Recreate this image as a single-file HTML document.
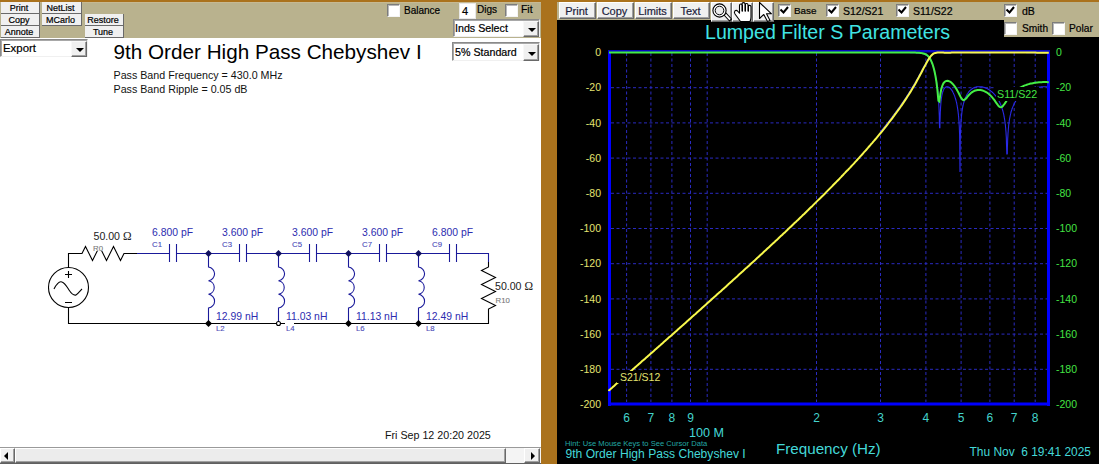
<!DOCTYPE html>
<html><head><meta charset="utf-8">
<style>
html,body{margin:0;padding:0;}
body{width:1099px;height:464px;overflow:hidden;position:relative;background:#aa721d;font-family:"Liberation Sans",sans-serif;}
.a{position:absolute;}
.tan{background:#b9b28e;}
.btn{-webkit-text-stroke:0.2px currentColor;position:absolute;box-sizing:border-box;background:#f0f0f0;border-top:1px solid #ffffff;border-left:1px solid #ffffff;border-right:1px solid #696969;border-bottom:1px solid #696969;box-shadow:inset -1px -1px 0 #a0a0a0;color:#000;text-align:center;white-space:nowrap;}
.sb{font-size:9px;line-height:11px;padding-right:2px;padding-top:1px;border-top:0;border-left:0;box-shadow:none;border-right:1px solid #6a6a6a;border-bottom:1px solid #6a6a6a;}
.rb{font-size:11px;line-height:15px;color:#1c1c3c;padding-top:1px;padding-right:2px;}
.chk{position:absolute;box-sizing:border-box;width:13px;height:13px;background:#fff;border-top:1px solid #7c7c7c;border-left:1px solid #7c7c7c;border-right:1px solid #f4f4f4;border-bottom:1px solid #f4f4f4;box-shadow:inset 1px 1px 0 #b8b8b8;}
.lbl{-webkit-text-stroke:0.2px currentColor;position:absolute;font-size:10px;line-height:12px;color:#000;white-space:nowrap;}
.dd{-webkit-text-stroke:0.2px currentColor;position:absolute;box-sizing:border-box;background:#fff;border-top:1px solid #8a8a8a;border-left:1px solid #8a8a8a;border-right:1px solid #f0f0f0;border-bottom:1px solid #f0f0f0;box-shadow:inset 1px 1px 0 #a8a8a8;font-size:11px;white-space:nowrap;}
.ddb{position:absolute;box-sizing:border-box;background:#f0f0f0;border-top:1px solid #f8f8f8;border-left:1px solid #f8f8f8;border-right:1px solid #696969;border-bottom:1px solid #696969;box-shadow:inset -1px -1px 0 #a0a0a0;}
.tri{position:absolute;width:0;height:0;border-left:4px solid transparent;border-right:4px solid transparent;border-top:4px solid #000;}
svg text{font-family:"Liberation Sans",sans-serif;}
</style></head><body>
<!-- LEFT PANEL -->
<div class="a tan" style="left:0;top:2px;width:541px;height:36px;"></div>
<div class="a" style="left:0;top:2px;width:541px;height:1px;background:#c6b993;"></div>
<div class="a" style="left:0;top:38px;width:541px;height:410px;background:#fff;"></div>

<div class="btn sb" style="left:1px;top:2px;width:39px;height:12px;">Print</div>
<div class="btn sb" style="left:1px;top:14px;width:39px;height:12px;">Copy</div>
<div class="btn sb" style="left:1px;top:26px;width:39px;height:12px;">Annote</div>
<div class="btn sb" style="left:42px;top:2px;width:40px;height:12px;">NetList</div>
<div class="btn sb" style="left:42px;top:14px;width:40px;height:12px;">MCarlo</div>
<div class="btn sb" style="left:85px;top:14px;width:39px;height:12px;">Restore</div>
<div class="btn sb" style="left:85px;top:26px;width:39px;height:12px;">Tune</div>

<div class="dd" style="left:0;top:39px;width:88px;height:18px;"><span class="a" style="left:2px;top:2px;font-size:11.4px;line-height:13px;">Export</span>
 <div class="ddb" style="left:70px;top:1px;width:16px;height:16px;"><div class="tri" style="left:4px;top:6px;"></div></div></div>

<div class="chk" style="left:387px;top:4px;"></div>
<div class="lbl" style="left:404px;top:5px;">Balance</div>
<div class="dd" style="left:459px;top:3px;width:17px;height:16px;box-shadow:none;border-color:#e8e8e8;"><span class="a" style="left:2px;top:1px;font-size:11px;line-height:13px;">4</span></div>
<div class="lbl" style="left:477px;top:4px;font-size:10px;">Digs</div>
<div class="chk" style="left:505px;top:4px;"></div>
<div class="lbl" style="left:521px;top:4px;font-size:10.4px;">Fit</div>

<div class="dd" style="left:453px;top:19px;width:87px;height:18px;"><span class="a" style="left:1px;top:2px;font-size:10.7px;line-height:13px;">Inds Select</span>
 <div class="ddb" style="left:69px;top:1px;width:16px;height:16px;"><div class="tri" style="left:4px;top:6px;"></div></div></div>
<div class="dd" style="left:452px;top:42px;width:88px;height:19px;"><span class="a" style="left:2px;top:3px;font-size:10.7px;line-height:13px;">5% Standard</span>
 <div class="ddb" style="left:70px;top:1px;width:16px;height:17px;"><div class="tri" style="left:4px;top:7px;"></div></div></div>

<svg class="a" style="left:0;top:0;" width="541" height="464" viewBox="0 0 541 464">
 <g fill="#000">
  <text x="113.5" y="58.5" font-size="20.7">9th Order High Pass Chebyshev I</text>
  <text x="113.5" y="78.5" font-size="10.7" fill="#111">Pass Band Frequency = 430.0 MHz</text>
  <text x="113.5" y="92.5" font-size="10.7" fill="#111">Pass Band Ripple = 0.05 dB</text>
  <text x="385" y="438.5" font-size="10.7" fill="#111">Fri Sep 12 20:20 2025</text>
 </g>
 <g fill="none" stroke="#000" stroke-width="1.1">
  <circle cx="68.5" cy="287.5" r="20"/>
  <path d="M68.5,267.5 L68.5,253.5 L82,253.5 L85.5,246.5 L92.5,260.5 L99.5,246.5 L106.5,260.5 L113.5,246.5 L120.5,260.5 L124,253.5 L137,253.5"/>
  <path d="M68.5,307.5 L68.5,323.5 L488.5,323.5 L488.5,309 L495.5,305.5 L481.5,298.5 L495.5,291.5 L481.5,284.5 L495.5,277.5 L481.5,270.5 L488.5,267 L488.5,262"/>
  <path d="M65,274.5 L72,274.5 M68.5,271 L68.5,278 M65,302.5 L72,302.5"/>
  <path d="M54,289 C57,283 60,281 62,282 C65,283 67,287 69,290 C71,293 73,296 76,295 C78,294 80,291 82,289"/>
 </g>
 <g fill="none" stroke="#1a1a9a" stroke-width="1.1">
  <path d="M137,253.5 L169.5,253.5 M176.5,253.5 L239.5,253.5 M246.5,253.5 L309.5,253.5 M316.5,253.5 L379.5,253.5 M386.5,253.5 L449.5,253.5 M456.5,253.5 L488.5,253.5 L488.5,262"/>
  <line x1="169.5" y1="244" x2="169.5" y2="262"/><line x1="176.5" y1="244" x2="176.5" y2="262"/><line x1="239.5" y1="244" x2="239.5" y2="262"/><line x1="246.5" y1="244" x2="246.5" y2="262"/><line x1="309.5" y1="244" x2="309.5" y2="262"/><line x1="316.5" y1="244" x2="316.5" y2="262"/><line x1="379.5" y1="244" x2="379.5" y2="262"/><line x1="386.5" y1="244" x2="386.5" y2="262"/><line x1="449.5" y1="244" x2="449.5" y2="262"/><line x1="456.5" y1="244" x2="456.5" y2="262"/>
  <path d="M208.5,253 L208.5,267 A6.9,6.9 0 0 1 208.5,280.7 A6.9,6.9 0 0 1 208.5,294.3 A6.9,6.9 0 0 1 208.5,308.0 L208.5,323"/><path d="M278.5,253 L278.5,267 A6.9,6.9 0 0 1 278.5,280.7 A6.9,6.9 0 0 1 278.5,294.3 A6.9,6.9 0 0 1 278.5,308.0 L278.5,323"/><path d="M348.5,253 L348.5,267 A6.9,6.9 0 0 1 348.5,280.7 A6.9,6.9 0 0 1 348.5,294.3 A6.9,6.9 0 0 1 348.5,308.0 L348.5,323"/><path d="M418.5,253 L418.5,267 A6.9,6.9 0 0 1 418.5,280.7 A6.9,6.9 0 0 1 418.5,294.3 A6.9,6.9 0 0 1 418.5,308.0 L418.5,323"/>
 </g>
 <g fill="#101060">
  <path d="M208.5,250 L212,253.5 L208.5,257 L205,253.5 Z"/><path d="M278.5,250 L282,253.5 L278.5,257 L275,253.5 Z"/><path d="M348.5,250 L352,253.5 L348.5,257 L345,253.5 Z"/><path d="M418.5,250 L422,253.5 L418.5,257 L415,253.5 Z"/>
 </g>
 <g fill="#000">
  <path d="M208.5,320 L212,323.5 L208.5,327 L205,323.5 Z"/><path d="M348.5,320 L352,323.5 L348.5,327 L345,323.5 Z"/><path d="M418.5,320 L422,323.5 L418.5,327 L415,323.5 Z"/>
 </g>
 <circle cx="278.5" cy="323.5" r="2" fill="#fff" stroke="#000" stroke-width="1.1"/>
 <!-- label backgrounds -->
 <rect x="93" y="244" width="10" height="7" fill="#fff"/>
 <rect x="285" y="322" width="9" height="10" fill="#fff"/>
 <g font-size="7.8" fill="#777" stroke="#777" stroke-width="0.1">
  <text x="93" y="250.5">R0</text>
  <text x="495.5" y="302.5">R10</text>
 </g>
 <g font-size="10.6" fill="#222">
  <text x="93.5" y="239.5">50.00 <tspan font-family="Liberation Serif" font-size="11.5">Ω</tspan></text>
  <text x="495" y="289.5">50.00 <tspan font-family="Liberation Serif" font-size="11.5">Ω</tspan></text>
 </g>
 <g font-size="10.4" fill="#2c2cb0">
  <text x="152" y="235.5">6.800 pF</text>
  <text x="222" y="235.5">3.600 pF</text>
  <text x="292" y="235.5">3.600 pF</text>
  <text x="362" y="235.5">3.600 pF</text>
  <text x="432" y="235.5">6.800 pF</text>
  <text x="216" y="319.5">12.99 nH</text>
  <text x="286" y="319.5">11.03 nH</text>
  <text x="356" y="319.5">11.13 nH</text>
  <text x="426" y="319.5">12.49 nH</text>
 </g>
 <g font-size="7.8" fill="#4a4ab8" stroke="#4a4ab8" stroke-width="0.1">
  <text x="152" y="246.5">C1</text><text x="222" y="246.5">C3</text><text x="292" y="246.5">C5</text><text x="362" y="246.5">C7</text><text x="432" y="246.5">C9</text>
  <text x="216" y="331">L2</text><text x="286" y="331">L4</text><text x="356" y="331">L6</text><text x="426" y="331">L8</text>
 </g>
</svg>

<!-- scrollbar -->
<div class="a" style="left:0;top:447px;width:541px;height:1px;background:#9a9a9a;"></div>
<div class="a" style="left:0;top:448px;width:541px;height:16px;background:#f4f4f4;"></div>
<div class="btn" style="left:0;top:448px;width:15px;height:15px;"><div class="a" style="left:3px;top:3px;width:0;height:0;border-top:4px solid transparent;border-bottom:4px solid transparent;border-right:4px solid #000;"></div></div>
<div class="btn" style="left:15px;top:448px;width:491px;height:15px;background:#ececec;"></div>
<div class="btn" style="left:524px;top:448px;width:16px;height:15px;"><div class="a" style="left:6px;top:3px;width:0;height:0;border-top:4px solid transparent;border-bottom:4px solid transparent;border-left:4px solid #000;"></div></div>
<div class="a" style="left:0;top:463px;width:541px;height:1px;background:#606060;"></div>

<!-- RIGHT PANEL -->
<div class="a tan" style="left:557px;top:2px;width:542px;height:18px;background:#b9b28e;"></div>
<div class="a tan" style="left:1004px;top:20px;width:95px;height:17px;background:#b9b28e;"></div>
<div class="a" style="left:557px;top:20px;width:542px;height:444px;background:#000;"></div>
<div class="a" style="left:1004px;top:20px;width:95px;height:17px;background:#b9b28e;"></div>

<div class="btn rb" style="left:559px;top:2px;width:37px;height:17px;">Print</div>
<div class="btn rb" style="left:597px;top:2px;width:37px;height:17px;">Copy</div>
<div class="btn rb" style="left:635px;top:2px;width:37px;height:17px;">Limits</div>
<div class="btn rb" style="left:673px;top:2px;width:37px;height:17px;">Text</div>
<div class="btn" style="left:711px;top:2px;width:21px;height:20px;"></div>
<div class="btn" style="left:732px;top:2px;width:21px;height:20px;"></div>
<div class="btn" style="left:753px;top:2px;width:21px;height:20px;"></div>
<svg class="a" style="left:0;top:0;" width="780" height="24" viewBox="0 0 780 24">
 <g fill="#fff" stroke="#000" stroke-width="1.1" stroke-linejoin="round">
  <path d="M724,15 L726,13 L731.5,19 L729.5,21 Z"/>
  <circle cx="719.5" cy="10.5" r="6.6"/>
  <circle cx="719.5" cy="10.5" r="4.3" fill="#ececec" stroke-width="1"/>
  <path d="M740.5,21.5 L735,14 Q733.8,12 735,10.8 Q736.5,9.8 738,11.5 L739.5,13.2 L739.5,5.5 Q739.5,4 740.8,4 Q742,4 742,5.5 L742,11 L742,4 Q742,2.6 743.5,2.6 Q745,2.6 745,4 L745,11 L745,4.8 Q745,3.5 746.5,3.5 Q748,3.5 748,4.8 L748,11 L748,6.5 Q748,5.4 749.4,5.4 Q751,5.4 751,6.5 L751,17 Q751,19.5 750,21.5 Z"/>
  <path d="M742.5,4.5 L742.5,11.5 M745.5,4 L745.5,11.5 M748.5,5 L748.5,11.5" fill="none" stroke-width="1"/>
  <path d="M759.5,2.5 L759.5,18.5 L763.8,14.5 L767.5,21.5 L770,20.5 L766.5,13.8 L771.5,13.8 Z"/>
 </g>
</svg>

<div class="chk" style="left:778px;top:4px;"></div>
<div class="lbl" style="left:794px;top:4.5px;font-size:9.9px;">Base</div>
<div class="chk" style="left:826px;top:4px;"></div>
<div class="lbl" style="left:843px;top:4.5px;font-size:10.5px;">S12/S21</div>
<div class="chk" style="left:896px;top:4px;"></div>
<div class="lbl" style="left:913px;top:4.5px;font-size:10.5px;">S11/S22</div>
<div class="chk" style="left:1004px;top:4px;"></div>
<div class="lbl" style="left:1022px;top:4.5px;font-size:10.5px;">dB</div>
<div class="chk" style="left:1004px;top:22px;"></div>
<div class="lbl" style="left:1022px;top:22.5px;font-size:10.2px;">Smith</div>
<div class="chk" style="left:1052px;top:22px;"></div>
<div class="lbl" style="left:1069px;top:22.5px;font-size:10.2px;">Polar</div>
<svg class="a" style="left:0;top:0;" width="1099" height="20" viewBox="0 0 1099 20">
 <g fill="none" stroke="#000" stroke-width="2">
  <path d="M780.5,9.5 L783.5,12.5 L788,7"/>
  <path d="M828.5,9.5 L831.5,12.5 L836,7"/>
  <path d="M898.5,9.5 L901.5,12.5 L906,7"/>
  <path d="M1006.5,9.5 L1009.5,12.5 L1014,7"/>
 </g>
</svg>

<svg class="a" style="left:0;top:0;" width="1099" height="464" viewBox="0 0 1099 464">
 <text x="705" y="38.5" font-size="19.6" fill="#40e4e4">Lumped Filter S Parameters</text>
 <g stroke="#2a2ac0" stroke-width="1" stroke-dasharray="3,2.5">
  <line x1="626.6" y1="53" x2="626.6" y2="402" />
<line x1="650.9" y1="53" x2="650.9" y2="402" />
<line x1="671.9" y1="53" x2="671.9" y2="402" />
<line x1="690.5" y1="53" x2="690.5" y2="402" />
<line x1="707.2" y1="53" x2="707.2" y2="402" />
<line x1="816.5" y1="53" x2="816.5" y2="402" />
<line x1="880.5" y1="53" x2="880.5" y2="402" />
<line x1="925.9" y1="53" x2="925.9" y2="402" />
<line x1="961.1" y1="53" x2="961.1" y2="402" />
<line x1="989.9" y1="53" x2="989.9" y2="402" />
<line x1="1014.2" y1="53" x2="1014.2" y2="402" />
<line x1="1035.2" y1="53" x2="1035.2" y2="402" />
<line x1="611" y1="87.7" x2="1047" y2="87.7" />
<line x1="611" y1="122.9" x2="1047" y2="122.9" />
<line x1="611" y1="158.1" x2="1047" y2="158.1" />
<line x1="611" y1="193.3" x2="1047" y2="193.3" />
<line x1="611" y1="228.5" x2="1047" y2="228.5" />
<line x1="611" y1="263.7" x2="1047" y2="263.7" />
<line x1="611" y1="298.9" x2="1047" y2="298.9" />
<line x1="611" y1="334.1" x2="1047" y2="334.1" />
<line x1="611" y1="369.3" x2="1047" y2="369.3" />
 </g>
 <path d="M681.9,52.5 L682.0,52.5 L682.2,52.5 L682.3,52.5 L682.4,52.5 L682.6,52.5 L682.7,52.5 L682.9,52.5 L683.0,52.5 L683.2,52.5 L683.3,52.5 L683.5,52.5 L683.6,52.5 L683.8,52.5 L683.9,52.5 L684.1,52.5 L684.2,52.5 L684.4,52.5 L684.5,52.5 L684.7,52.5 L684.8,52.5 L684.9,52.5 L685.1,52.5 L685.2,52.5 L685.4,52.5 L685.5,52.5 L685.7,52.5 L685.8,52.5 L686.0,52.5 L686.1,52.5 L686.3,52.5 L686.4,52.5 L686.6,52.5 L686.7,52.5 L686.9,52.5 L687.0,52.5 L687.1,52.5 L687.3,52.5 L687.4,52.5 L687.6,52.5 L687.7,52.5 L687.9,52.5 L688.0,52.5 L688.2,52.5 L688.3,52.5 L688.5,52.5 L688.6,52.5 L688.8,52.5 L688.9,52.5 L689.1,52.5 L689.2,52.5 L689.3,52.5 L689.5,52.5 L689.6,52.5 L689.8,52.5 L689.9,52.5 L690.1,52.5 L690.2,52.5 L690.4,52.5 L690.5,52.5 L690.7,52.5 L690.8,52.5 L691.0,52.5 L691.1,52.5 L691.3,52.5 L691.4,52.5 L691.6,52.5 L691.7,52.5 L691.8,52.5 L692.0,52.5 L692.1,52.5 L692.3,52.5 L692.4,52.5 L692.6,52.5 L692.7,52.5 L692.9,52.5 L693.0,52.5 L693.2,52.5 L693.3,52.5 L693.5,52.5 L693.6,52.5 L693.8,52.5 L693.9,52.5 L694.0,52.5 L694.2,52.5 L694.3,52.5 L694.5,52.5 L694.6,52.5 L694.8,52.5 L694.9,52.5 L695.1,52.5 L695.2,52.5 L695.4,52.5 L695.5,52.5 L695.7,52.5 L695.8,52.5 L696.0,52.5 L696.1,52.5 L696.3,52.5 L696.4,52.5 L696.5,52.5 L696.7,52.5 L696.8,52.5 L697.0,52.5 L697.1,52.5 L697.3,52.5 L697.4,52.5 L697.6,52.5 L697.7,52.5 L697.9,52.5 L698.0,52.5 L698.2,52.5 L698.3,52.5 L698.5,52.5 L698.6,52.5 L698.7,52.5 L698.9,52.5 L699.0,52.5 L699.2,52.5 L699.3,52.5 L699.5,52.5 L699.6,52.5 L699.8,52.5 L699.9,52.5 L700.1,52.5 L700.2,52.5 L700.4,52.5 L700.5,52.5 L700.7,52.5 L700.8,52.5 L701.0,52.5 L701.1,52.5 L701.2,52.5 L701.4,52.5 L701.5,52.5 L701.7,52.5 L701.8,52.5 L702.0,52.5 L702.1,52.5 L702.3,52.5 L702.4,52.5 L702.6,52.5 L702.7,52.5 L702.9,52.5 L703.0,52.5 L703.2,52.5 L703.3,52.5 L703.4,52.5 L703.6,52.5 L703.7,52.5 L703.9,52.5 L704.0,52.5 L704.2,52.5 L704.3,52.5 L704.5,52.5 L704.6,52.5 L704.8,52.5 L704.9,52.5 L705.1,52.5 L705.2,52.5 L705.4,52.5 L705.5,52.5 L705.6,52.5 L705.8,52.5 L705.9,52.5 L706.1,52.5 L706.2,52.5 L706.4,52.5 L706.5,52.5 L706.7,52.5 L706.8,52.5 L707.0,52.5 L707.1,52.5 L707.3,52.5 L707.4,52.5 L707.6,52.5 L707.7,52.5 L707.9,52.5 L708.0,52.5 L708.1,52.5 L708.3,52.5 L708.4,52.5 L708.6,52.5 L708.7,52.5 L708.9,52.5 L709.0,52.5 L709.2,52.5 L709.3,52.5 L709.5,52.5 L709.6,52.5 L709.8,52.5 L709.9,52.5 L710.1,52.5 L710.2,52.5 L710.3,52.5 L710.5,52.5 L710.6,52.5 L710.8,52.5 L710.9,52.5 L711.1,52.5 L711.2,52.5 L711.4,52.5 L711.5,52.5 L711.7,52.5 L711.8,52.5 L712.0,52.5 L712.1,52.5 L712.3,52.5 L712.4,52.5 L712.6,52.5 L712.7,52.5 L712.8,52.5 L713.0,52.5 L713.1,52.5 L713.3,52.5 L713.4,52.5 L713.6,52.5 L713.7,52.5 L713.9,52.5 L714.0,52.5 L714.2,52.5 L714.3,52.5 L714.5,52.5 L714.6,52.5 L714.8,52.5 L714.9,52.5 L715.0,52.5 L715.2,52.5 L715.3,52.5 L715.5,52.5 L715.6,52.5 L715.8,52.5 L715.9,52.5 L716.1,52.5 L716.2,52.5 L716.4,52.5 L716.5,52.5 L716.7,52.5 L716.8,52.5 L717.0,52.5 L717.1,52.5 L717.3,52.5 L717.4,52.5 L717.5,52.5 L717.7,52.5 L717.8,52.5 L718.0,52.5 L718.1,52.5 L718.3,52.5 L718.4,52.5 L718.6,52.5 L718.7,52.5 L718.9,52.5 L719.0,52.5 L719.2,52.5 L719.3,52.5 L719.5,52.5 L719.6,52.5 L719.7,52.5 L719.9,52.5 L720.0,52.5 L720.2,52.5 L720.3,52.5 L720.5,52.5 L720.6,52.5 L720.8,52.5 L720.9,52.5 L721.1,52.5 L721.2,52.5 L721.4,52.5 L721.5,52.5 L721.7,52.5 L721.8,52.5 L721.9,52.5 L722.1,52.5 L722.2,52.5 L722.4,52.5 L722.5,52.5 L722.7,52.5 L722.8,52.5 L723.0,52.5 L723.1,52.5 L723.3,52.5 L723.4,52.5 L723.6,52.5 L723.7,52.5 L723.9,52.5 L724.0,52.5 L724.2,52.5 L724.3,52.5 L724.4,52.5 L724.6,52.5 L724.7,52.5 L724.9,52.5 L725.0,52.5 L725.2,52.5 L725.3,52.5 L725.5,52.5 L725.6,52.5 L725.8,52.5 L725.9,52.5 L726.1,52.5 L726.2,52.5 L726.4,52.5 L726.5,52.5 L726.6,52.5 L726.8,52.5 L726.9,52.5 L727.1,52.5 L727.2,52.5 L727.4,52.5 L727.5,52.5 L727.7,52.5 L727.8,52.5 L728.0,52.5 L728.1,52.5 L728.3,52.5 L728.4,52.5 L728.6,52.5 L728.7,52.5 L728.9,52.5 L729.0,52.5 L729.1,52.5 L729.3,52.5 L729.4,52.5 L729.6,52.5 L729.7,52.5 L729.9,52.5 L730.0,52.5 L730.2,52.5 L730.3,52.5 L730.5,52.5 L730.6,52.5 L730.8,52.5 L730.9,52.5 L731.1,52.5 L731.2,52.5 L731.3,52.5 L731.5,52.5 L731.6,52.5 L731.8,52.5 L731.9,52.5 L732.1,52.5 L732.2,52.5 L732.4,52.5 L732.5,52.5 L732.7,52.5 L732.8,52.5 L733.0,52.5 L733.1,52.5 L733.3,52.5 L733.4,52.5 L733.6,52.5 L733.7,52.5 L733.8,52.5 L734.0,52.5 L734.1,52.5 L734.3,52.5 L734.4,52.5 L734.6,52.5 L734.7,52.5 L734.9,52.5 L735.0,52.5 L735.2,52.5 L735.3,52.5 L735.5,52.5 L735.6,52.5 L735.8,52.5 L735.9,52.5 L736.0,52.5 L736.2,52.5 L736.3,52.5 L736.5,52.5 L736.6,52.5 L736.8,52.5 L736.9,52.5 L737.1,52.5 L737.2,52.5 L737.4,52.5 L737.5,52.5 L737.7,52.5 L737.8,52.5 L738.0,52.5 L738.1,52.5 L738.3,52.5 L738.4,52.5 L738.5,52.5 L738.7,52.5 L738.8,52.5 L739.0,52.5 L739.1,52.5 L739.3,52.5 L739.4,52.5 L739.6,52.5 L739.7,52.5 L739.9,52.5 L740.0,52.5 L740.2,52.5 L740.3,52.5 L740.5,52.5 L740.6,52.5 L740.7,52.5 L740.9,52.5 L741.0,52.5 L741.2,52.5 L741.3,52.5 L741.5,52.5 L741.6,52.5 L741.8,52.5 L741.9,52.5 L742.1,52.5 L742.2,52.5 L742.4,52.5 L742.5,52.5 L742.7,52.5 L742.8,52.5 L742.9,52.5 L743.1,52.5 L743.2,52.5 L743.4,52.5 L743.5,52.5 L743.7,52.5 L743.8,52.5 L744.0,52.5 L744.1,52.5 L744.3,52.5 L744.4,52.5 L744.6,52.5 L744.7,52.5 L744.9,52.5 L745.0,52.5 L745.2,52.5 L745.3,52.5 L745.4,52.5 L745.6,52.5 L745.7,52.5 L745.9,52.5 L746.0,52.5 L746.2,52.5 L746.3,52.5 L746.5,52.5 L746.6,52.5 L746.8,52.5 L746.9,52.5 L747.1,52.5 L747.2,52.5 L747.4,52.5 L747.5,52.5 L747.6,52.5 L747.8,52.5 L747.9,52.5 L748.1,52.5 L748.2,52.5 L748.4,52.5 L748.5,52.5 L748.7,52.5 L748.8,52.5 L749.0,52.5 L749.1,52.5 L749.3,52.5 L749.4,52.5 L749.6,52.5 L749.7,52.5 L749.9,52.5 L750.0,52.5 L750.1,52.5 L750.3,52.5 L750.4,52.5 L750.6,52.5 L750.7,52.5 L750.9,52.5 L751.0,52.5 L751.2,52.5 L751.3,52.5 L751.5,52.5 L751.6,52.5 L751.8,52.5 L751.9,52.5 L752.1,52.5 L752.2,52.5 L752.3,52.5 L752.5,52.5 L752.6,52.5 L752.8,52.5 L752.9,52.5 L753.1,52.5 L753.2,52.5 L753.4,52.5 L753.5,52.5 L753.7,52.5 L753.8,52.5 L754.0,52.5 L754.1,52.5 L754.3,52.5 L754.4,52.5 L754.6,52.5 L754.7,52.5 L754.8,52.5 L755.0,52.5 L755.1,52.5 L755.3,52.5 L755.4,52.5 L755.6,52.5 L755.7,52.5 L755.9,52.5 L756.0,52.5 L756.2,52.5 L756.3,52.5 L756.5,52.5 L756.6,52.5 L756.8,52.5 L756.9,52.5 L757.0,52.5 L757.2,52.5 L757.3,52.5 L757.5,52.5 L757.6,52.5 L757.8,52.5 L757.9,52.5 L758.1,52.5 L758.2,52.5 L758.4,52.5 L758.5,52.5 L758.7,52.5 L758.8,52.5 L759.0,52.5 L759.1,52.5 L759.2,52.5 L759.4,52.5 L759.5,52.5 L759.7,52.5 L759.8,52.5 L760.0,52.5 L760.1,52.5 L760.3,52.5 L760.4,52.5 L760.6,52.5 L760.7,52.5 L760.9,52.5 L761.0,52.5 L761.2,52.5 L761.3,52.5 L761.5,52.5 L761.6,52.5 L761.7,52.5 L761.9,52.5 L762.0,52.5 L762.2,52.5 L762.3,52.5 L762.5,52.5 L762.6,52.5 L762.8,52.5 L762.9,52.5 L763.1,52.5 L763.2,52.5 L763.4,52.5 L763.5,52.5 L763.7,52.5 L763.8,52.5 L763.9,52.5 L764.1,52.5 L764.2,52.5 L764.4,52.5 L764.5,52.5 L764.7,52.5 L764.8,52.5 L765.0,52.5 L765.1,52.5 L765.3,52.5 L765.4,52.5 L765.6,52.5 L765.7,52.5 L765.9,52.5 L766.0,52.5 L766.2,52.5 L766.3,52.5 L766.4,52.5 L766.6,52.5 L766.7,52.5 L766.9,52.5 L767.0,52.5 L767.2,52.5 L767.3,52.5 L767.5,52.5 L767.6,52.5 L767.8,52.5 L767.9,52.5 L768.1,52.5 L768.2,52.5 L768.4,52.5 L768.5,52.5 L768.6,52.5 L768.8,52.5 L768.9,52.5 L769.1,52.5 L769.2,52.5 L769.4,52.5 L769.5,52.5 L769.7,52.5 L769.8,52.5 L770.0,52.5 L770.1,52.5 L770.3,52.5 L770.4,52.5 L770.6,52.5 L770.7,52.5 L770.9,52.5 L771.0,52.5 L771.1,52.5 L771.3,52.5 L771.4,52.5 L771.6,52.5 L771.7,52.5 L771.9,52.5 L772.0,52.5 L772.2,52.5 L772.3,52.5 L772.5,52.5 L772.6,52.5 L772.8,52.5 L772.9,52.5 L773.1,52.5 L773.2,52.5 L773.3,52.5 L773.5,52.5 L773.6,52.5 L773.8,52.5 L773.9,52.5 L774.1,52.5 L774.2,52.5 L774.4,52.5 L774.5,52.5 L774.7,52.5 L774.8,52.5 L775.0,52.5 L775.1,52.5 L775.3,52.5 L775.4,52.5 L775.5,52.5 L775.7,52.5 L775.8,52.5 L776.0,52.5 L776.1,52.5 L776.3,52.5 L776.4,52.5 L776.6,52.5 L776.7,52.5 L776.9,52.5 L777.0,52.5 L777.2,52.5 L777.3,52.5 L777.5,52.5 L777.6,52.5 L777.8,52.5 L777.9,52.5 L778.0,52.5 L778.2,52.5 L778.3,52.5 L778.5,52.5 L778.6,52.5 L778.8,52.5 L778.9,52.5 L779.1,52.5 L779.2,52.5 L779.4,52.5 L779.5,52.5 L779.7,52.5 L779.8,52.5 L780.0,52.5 L780.1,52.5 L780.2,52.5 L780.4,52.5 L780.5,52.5 L780.7,52.5 L780.8,52.5 L781.0,52.5 L781.1,52.5 L781.3,52.5 L781.4,52.5 L781.6,52.5 L781.7,52.5 L781.9,52.5 L782.0,52.5 L782.2,52.5 L782.3,52.5 L782.5,52.5 L782.6,52.5 L782.7,52.5 L782.9,52.5 L783.0,52.5 L783.2,52.5 L783.3,52.5 L783.5,52.5 L783.6,52.5 L783.8,52.5 L783.9,52.5 L784.1,52.5 L784.2,52.5 L784.4,52.5 L784.5,52.5 L784.7,52.5 L784.8,52.5 L784.9,52.5 L785.1,52.5 L785.2,52.5 L785.4,52.5 L785.5,52.5 L785.7,52.5 L785.8,52.5 L786.0,52.5 L786.1,52.5 L786.3,52.5 L786.4,52.5 L786.6,52.5 L786.7,52.5 L786.9,52.5 L787.0,52.5 L787.2,52.5 L787.3,52.5 L787.4,52.5 L787.6,52.5 L787.7,52.5 L787.9,52.5 L788.0,52.5 L788.2,52.5 L788.3,52.5 L788.5,52.5 L788.6,52.5 L788.8,52.5 L788.9,52.5 L789.1,52.5 L789.2,52.5 L789.4,52.5 L789.5,52.5 L789.6,52.5 L789.8,52.5 L789.9,52.5 L790.1,52.5 L790.2,52.5 L790.4,52.5 L790.5,52.5 L790.7,52.5 L790.8,52.5 L791.0,52.5 L791.1,52.5 L791.3,52.5 L791.4,52.5 L791.6,52.5 L791.7,52.5 L791.9,52.5 L792.0,52.5 L792.1,52.5 L792.3,52.5 L792.4,52.5 L792.6,52.5 L792.7,52.5 L792.9,52.5 L793.0,52.5 L793.2,52.5 L793.3,52.5 L793.5,52.5 L793.6,52.5 L793.8,52.5 L793.9,52.5 L794.1,52.5 L794.2,52.5 L794.3,52.5 L794.5,52.5 L794.6,52.5 L794.8,52.5 L794.9,52.5 L795.1,52.5 L795.2,52.5 L795.4,52.5 L795.5,52.5 L795.7,52.5 L795.8,52.5 L796.0,52.5 L796.1,52.5 L796.3,52.5 L796.4,52.5 L796.5,52.5 L796.7,52.5 L796.8,52.5 L797.0,52.5 L797.1,52.5 L797.3,52.5 L797.4,52.5 L797.6,52.5 L797.7,52.5 L797.9,52.5 L798.0,52.5 L798.2,52.5 L798.3,52.5 L798.5,52.5 L798.6,52.5 L798.8,52.5 L798.9,52.5 L799.0,52.5 L799.2,52.5 L799.3,52.5 L799.5,52.5 L799.6,52.5 L799.8,52.5 L799.9,52.5 L800.1,52.5 L800.2,52.5 L800.4,52.5 L800.5,52.5 L800.7,52.5 L800.8,52.5 L801.0,52.5 L801.1,52.5 L801.2,52.5 L801.4,52.5 L801.5,52.5 L801.7,52.5 L801.8,52.5 L802.0,52.5 L802.1,52.5 L802.3,52.5 L802.4,52.5 L802.6,52.5 L802.7,52.5 L802.9,52.5 L803.0,52.5 L803.2,52.5 L803.3,52.5 L803.5,52.5 L803.6,52.5 L803.7,52.5 L803.9,52.5 L804.0,52.5 L804.2,52.5 L804.3,52.5 L804.5,52.5 L804.6,52.5 L804.8,52.5 L804.9,52.5 L805.1,52.5 L805.2,52.5 L805.4,52.5 L805.5,52.5 L805.7,52.5 L805.8,52.5 L805.9,52.5 L806.1,52.5 L806.2,52.5 L806.4,52.5 L806.5,52.5 L806.7,52.5 L806.8,52.5 L807.0,52.5 L807.1,52.5 L807.3,52.5 L807.4,52.5 L807.6,52.5 L807.7,52.5 L807.9,52.5 L808.0,52.5 L808.2,52.5 L808.3,52.5 L808.4,52.5 L808.6,52.5 L808.7,52.5 L808.9,52.5 L809.0,52.5 L809.2,52.5 L809.3,52.5 L809.5,52.5 L809.6,52.5 L809.8,52.5 L809.9,52.5 L810.1,52.5 L810.2,52.5 L810.4,52.5 L810.5,52.5 L810.6,52.5 L810.8,52.5 L810.9,52.5 L811.1,52.5 L811.2,52.5 L811.4,52.5 L811.5,52.5 L811.7,52.5 L811.8,52.5 L812.0,52.5 L812.1,52.5 L812.3,52.5 L812.4,52.5 L812.6,52.5 L812.7,52.5 L812.8,52.5 L813.0,52.5 L813.1,52.5 L813.3,52.5 L813.4,52.5 L813.6,52.5 L813.7,52.5 L813.9,52.5 L814.0,52.5 L814.2,52.5 L814.3,52.5 L814.5,52.5 L814.6,52.5 L814.8,52.5 L814.9,52.5 L815.1,52.5 L815.2,52.5 L815.3,52.5 L815.5,52.5 L815.6,52.5 L815.8,52.5 L815.9,52.5 L816.1,52.5 L816.2,52.5 L816.4,52.5 L816.5,52.5 L816.7,52.5 L816.8,52.5 L817.0,52.5 L817.1,52.5 L817.3,52.5 L817.4,52.5 L817.5,52.5 L817.7,52.5 L817.8,52.5 L818.0,52.5 L818.1,52.5 L818.3,52.5 L818.4,52.5 L818.6,52.5 L818.7,52.5 L818.9,52.5 L819.0,52.5 L819.2,52.5 L819.3,52.5 L819.5,52.5 L819.6,52.5 L819.8,52.5 L819.9,52.5 L820.0,52.5 L820.2,52.5 L820.3,52.5 L820.5,52.5 L820.6,52.5 L820.8,52.5 L820.9,52.5 L821.1,52.5 L821.2,52.5 L821.4,52.5 L821.5,52.5 L821.7,52.5 L821.8,52.5 L822.0,52.5 L822.1,52.5 L822.2,52.5 L822.4,52.5 L822.5,52.5 L822.7,52.5 L822.8,52.5 L823.0,52.5 L823.1,52.5 L823.3,52.5 L823.4,52.5 L823.6,52.5 L823.7,52.5 L823.9,52.5 L824.0,52.5 L824.2,52.5 L824.3,52.5 L824.5,52.5 L824.6,52.5 L824.7,52.5 L824.9,52.5 L825.0,52.5 L825.2,52.5 L825.3,52.5 L825.5,52.5 L825.6,52.5 L825.8,52.5 L825.9,52.5 L826.1,52.5 L826.2,52.5 L826.4,52.5 L826.5,52.5 L826.7,52.5 L826.8,52.5 L826.9,52.5 L827.1,52.5 L827.2,52.5 L827.4,52.5 L827.5,52.5 L827.7,52.5 L827.8,52.5 L828.0,52.5 L828.1,52.5 L828.3,52.5 L828.4,52.5 L828.6,52.5 L828.7,52.5 L828.9,52.5 L829.0,52.5 L829.1,52.5 L829.3,52.5 L829.4,52.5 L829.6,52.5 L829.7,52.5 L829.9,52.5 L830.0,52.5 L830.2,52.5 L830.3,52.5 L830.5,52.5 L830.6,52.5 L830.8,52.5 L830.9,52.5 L831.1,52.5 L831.2,52.5 L831.4,52.5 L831.5,52.5 L831.6,52.5 L831.8,52.5 L831.9,52.5 L832.1,52.5 L832.2,52.5 L832.4,52.5 L832.5,52.5 L832.7,52.5 L832.8,52.5 L833.0,52.5 L833.1,52.5 L833.3,52.5 L833.4,52.5 L833.6,52.5 L833.7,52.5 L833.8,52.5 L834.0,52.5 L834.1,52.5 L834.3,52.5 L834.4,52.5 L834.6,52.5 L834.7,52.5 L834.9,52.5 L835.0,52.5 L835.2,52.5 L835.3,52.5 L835.5,52.5 L835.6,52.5 L835.8,52.5 L835.9,52.5 L836.1,52.5 L836.2,52.5 L836.3,52.5 L836.5,52.5 L836.6,52.5 L836.8,52.5 L836.9,52.5 L837.1,52.5 L837.2,52.5 L837.4,52.5 L837.5,52.5 L837.7,52.5 L837.8,52.5 L838.0,52.5 L838.1,52.5 L838.3,52.5 L838.4,52.5 L838.5,52.5 L838.7,52.5 L838.8,52.5 L839.0,52.5 L839.1,52.5 L839.3,52.5 L839.4,52.5 L839.6,52.5 L839.7,52.5 L839.9,52.5 L840.0,52.5 L840.2,52.5 L840.3,52.5 L840.5,52.5 L840.6,52.5 L840.8,52.5 L840.9,52.5 L841.0,52.5 L841.2,52.5 L841.3,52.5 L841.5,52.5 L841.6,52.5 L841.8,52.5 L841.9,52.5 L842.1,52.5 L842.2,52.5 L842.4,52.5 L842.5,52.5 L842.7,52.5 L842.8,52.5 L843.0,52.5 L843.1,52.5 L843.2,52.5 L843.4,52.5 L843.5,52.5 L843.7,52.5 L843.8,52.5 L844.0,52.5 L844.1,52.5 L844.3,52.5 L844.4,52.5 L844.6,52.5 L844.7,52.5 L844.9,52.5 L845.0,52.5 L845.2,52.5 L845.3,52.5 L845.5,52.5 L845.6,52.5 L845.7,52.5 L845.9,52.5 L846.0,52.5 L846.2,52.5 L846.3,52.5 L846.5,52.5 L846.6,52.5 L846.8,52.5 L846.9,52.5 L847.1,52.5 L847.2,52.5 L847.4,52.5 L847.5,52.5 L847.7,52.5 L847.8,52.5 L847.9,52.5 L848.1,52.5 L848.2,52.5 L848.4,52.5 L848.5,52.5 L848.7,52.5 L848.8,52.5 L849.0,52.5 L849.1,52.5 L849.3,52.5 L849.4,52.5 L849.6,52.5 L849.7,52.5 L849.9,52.5 L850.0,52.5 L850.1,52.5 L850.3,52.5 L850.4,52.5 L850.6,52.5 L850.7,52.5 L850.9,52.5 L851.0,52.5 L851.2,52.5 L851.3,52.5 L851.5,52.5 L851.6,52.5 L851.8,52.5 L851.9,52.5 L852.1,52.5 L852.2,52.5 L852.4,52.5 L852.5,52.5 L852.6,52.5 L852.8,52.5 L852.9,52.5 L853.1,52.5 L853.2,52.5 L853.4,52.5 L853.5,52.5 L853.7,52.5 L853.8,52.5 L854.0,52.5 L854.1,52.5 L854.3,52.5 L854.4,52.5 L854.6,52.5 L854.7,52.5 L854.8,52.5 L855.0,52.5 L855.1,52.5 L855.3,52.5 L855.4,52.5 L855.6,52.5 L855.7,52.5 L855.9,52.5 L856.0,52.5 L856.2,52.5 L856.3,52.5 L856.5,52.5 L856.6,52.5 L856.8,52.5 L856.9,52.5 L857.1,52.5 L857.2,52.5 L857.3,52.5 L857.5,52.5 L857.6,52.5 L857.8,52.5 L857.9,52.5 L858.1,52.5 L858.2,52.5 L858.4,52.5 L858.5,52.5 L858.7,52.5 L858.8,52.5 L859.0,52.5 L859.1,52.5 L859.3,52.5 L859.4,52.5 L859.5,52.5 L859.7,52.5 L859.8,52.5 L860.0,52.5 L860.1,52.5 L860.3,52.5 L860.4,52.5 L860.6,52.5 L860.7,52.5 L860.9,52.5 L861.0,52.5 L861.2,52.5 L861.3,52.5 L861.5,52.5 L861.6,52.5 L861.8,52.5 L861.9,52.5 L862.0,52.5 L862.2,52.5 L862.3,52.5 L862.5,52.5 L862.6,52.5 L862.8,52.5 L862.9,52.5 L863.1,52.5 L863.2,52.5 L863.4,52.5 L863.5,52.5 L863.7,52.5 L863.8,52.5 L864.0,52.5 L864.1,52.5 L864.2,52.5 L864.4,52.5 L864.5,52.5 L864.7,52.5 L864.8,52.5 L865.0,52.5 L865.1,52.5 L865.3,52.5 L865.4,52.5 L865.6,52.5 L865.7,52.5 L865.9,52.5 L866.0,52.5 L866.2,52.5 L866.3,52.5 L866.4,52.5 L866.6,52.5 L866.7,52.5 L866.9,52.5 L867.0,52.5 L867.2,52.5 L867.3,52.5 L867.5,52.5 L867.6,52.5 L867.8,52.5 L867.9,52.5 L868.1,52.5 L868.2,52.5 L868.4,52.5 L868.5,52.5 L868.7,52.5 L868.8,52.5 L868.9,52.5 L869.1,52.5 L869.2,52.5 L869.4,52.5 L869.5,52.5 L869.7,52.5 L869.8,52.5 L870.0,52.5 L870.1,52.5 L870.3,52.5 L870.4,52.5 L870.6,52.5 L870.7,52.5 L870.9,52.5 L871.0,52.5 L871.1,52.5 L871.3,52.5 L871.4,52.5 L871.6,52.5 L871.7,52.5 L871.9,52.5 L872.0,52.5 L872.2,52.5 L872.3,52.5 L872.5,52.5 L872.6,52.5 L872.8,52.5 L872.9,52.5 L873.1,52.5 L873.2,52.5 L873.4,52.5 L873.5,52.5 L873.6,52.5 L873.8,52.5 L873.9,52.5 L874.1,52.5 L874.2,52.5 L874.4,52.5 L874.5,52.5 L874.7,52.5 L874.8,52.5 L875.0,52.5 L875.1,52.5 L875.3,52.5 L875.4,52.5 L875.6,52.5 L875.7,52.5 L875.8,52.5 L876.0,52.5 L876.1,52.5 L876.3,52.5 L876.4,52.5 L876.6,52.5 L876.7,52.5 L876.9,52.5 L877.0,52.5 L877.2,52.5 L877.3,52.5 L877.5,52.5 L877.6,52.5 L877.8,52.5 L877.9,52.5 L878.1,52.5 L878.2,52.5 L878.3,52.5 L878.5,52.5 L878.6,52.5 L878.8,52.5 L878.9,52.5 L879.1,52.5 L879.2,52.5 L879.4,52.5 L879.5,52.5 L879.7,52.5 L879.8,52.5 L880.0,52.5 L880.1,52.5 L880.3,52.5 L880.4,52.5 L880.5,52.5 L880.7,52.5 L880.8,52.5 L881.0,52.5 L881.1,52.5 L881.3,52.5 L881.4,52.5 L881.6,52.5 L881.7,52.5 L881.9,52.5 L882.0,52.5 L882.2,52.5 L882.3,52.5 L882.5,52.5 L882.6,52.5 L882.7,52.5 L882.9,52.5 L883.0,52.5 L883.2,52.5 L883.3,52.5 L883.5,52.5 L883.6,52.5 L883.8,52.5 L883.9,52.5 L884.1,52.5 L884.2,52.5 L884.4,52.5 L884.5,52.5 L884.7,52.5 L884.8,52.5 L885.0,52.5 L885.1,52.5 L885.2,52.5 L885.4,52.5 L885.5,52.5 L885.7,52.5 L885.8,52.5 L886.0,52.5 L886.1,52.5 L886.3,52.5 L886.4,52.5 L886.6,52.5 L886.7,52.5 L886.9,52.5 L887.0,52.5 L887.2,52.5 L887.3,52.5 L887.4,52.5 L887.6,52.5 L887.7,52.5 L887.9,52.5 L888.0,52.5 L888.2,52.5 L888.3,52.5 L888.5,52.5 L888.6,52.5 L888.8,52.5 L888.9,52.5 L889.1,52.5 L889.2,52.5 L889.4,52.5 L889.5,52.5 L889.7,52.5 L889.8,52.5 L889.9,52.5 L890.1,52.5 L890.2,52.5 L890.4,52.5 L890.5,52.5 L890.7,52.5 L890.8,52.5 L891.0,52.5 L891.1,52.5 L891.3,52.5 L891.4,52.5 L891.6,52.5 L891.7,52.5 L891.9,52.5 L892.0,52.5 L892.1,52.5 L892.3,52.5 L892.4,52.5 L892.6,52.5 L892.7,52.5 L892.9,52.5 L893.0,52.5 L893.2,52.5 L893.3,52.5 L893.5,52.5 L893.6,52.5 L893.8,52.5 L893.9,52.5 L894.1,52.5 L894.2,52.5 L894.4,52.5 L894.5,52.5 L894.6,52.5 L894.8,52.5 L894.9,52.5 L895.1,52.5 L895.2,52.5 L895.4,52.5 L895.5,52.5 L895.7,52.5 L895.8,52.5 L896.0,52.5 L896.1,52.5 L896.3,52.5 L896.4,52.5 L896.6,52.5 L896.7,52.5 L896.8,52.5 L897.0,52.5 L897.1,52.5 L897.3,52.5 L897.4,52.5 L897.6,52.5 L897.7,52.5 L897.9,52.5 L898.0,52.5 L898.2,52.5 L898.3,52.5 L898.5,52.5 L898.6,52.5 L898.8,52.5 L898.9,52.5 L899.1,52.5 L899.2,52.5 L899.3,52.5 L899.5,52.5 L899.6,52.5 L899.8,52.5 L899.9,52.5 L900.1,52.5 L900.2,52.5 L900.4,52.5 L900.5,52.5 L900.7,52.5 L900.8,52.5 L901.0,52.5 L901.1,52.5 L901.3,52.5 L901.4,52.5 L901.5,52.5 L901.7,52.5 L901.8,52.5 L902.0,52.5 L902.1,52.5 L902.3,52.5 L902.4,52.5 L902.6,52.5 L902.7,52.5 L902.9,52.5 L903.0,52.5 L903.2,52.5 L903.3,52.5 L903.5,52.5 L903.6,52.5 L903.7,52.5 L903.9,52.5 L904.0,52.5 L904.2,52.5 L904.3,52.5 L904.5,52.5 L904.6,52.5 L904.8,52.5 L904.9,52.5 L905.1,52.5 L905.2,52.5 L905.4,52.5 L905.5,52.5 L905.7,52.5 L905.8,52.5 L906.0,52.5 L906.1,52.5 L906.2,52.5 L906.4,52.5 L906.5,52.5 L906.7,52.5 L906.8,52.5 L907.0,52.5 L907.1,52.5 L907.3,52.5 L907.4,52.5 L907.6,52.5 L907.7,52.5 L907.9,52.5 L908.0,52.5 L908.2,52.5 L908.3,52.5 L908.4,52.5 L908.6,52.5 L908.7,52.5 L908.9,52.5 L909.0,52.5 L909.2,52.5 L909.3,52.5 L909.5,52.5 L909.6,52.5 L909.8,52.5 L909.9,52.5 L910.1,52.5 L910.2,52.6 L910.4,52.6 L910.5,52.6 L910.7,52.6 L910.8,52.6 L910.9,52.6 L911.1,52.6 L911.2,52.6 L911.4,52.6 L911.5,52.6 L911.7,52.6 L911.8,52.6 L912.0,52.6 L912.1,52.6 L912.3,52.6 L912.4,52.6 L912.6,52.6 L912.7,52.6 L912.9,52.6 L913.0,52.6 L913.1,52.6 L913.3,52.6 L913.4,52.6 L913.6,52.6 L913.7,52.6 L913.9,52.6 L914.0,52.6 L914.2,52.6 L914.3,52.6 L914.5,52.6 L914.6,52.6 L914.8,52.6 L914.9,52.6 L915.1,52.6 L915.2,52.7 L915.4,52.7 L915.5,52.7 L915.6,52.7 L915.8,52.7 L915.9,52.7 L916.1,52.7 L916.2,52.7 L916.4,52.7 L916.5,52.7 L916.7,52.7 L916.8,52.7 L917.0,52.7 L917.1,52.7 L917.3,52.7 L917.4,52.8 L917.6,52.8 L917.7,52.8 L917.8,52.8 L918.0,52.8 L918.1,52.8 L918.3,52.8 L918.4,52.8 L918.6,52.8 L918.7,52.9 L918.9,52.9 L919.0,52.9 L919.2,52.9 L919.3,52.9 L919.5,52.9 L919.6,52.9 L919.8,53.0 L919.9,53.0 L920.0,53.0 L920.2,53.0 L920.3,53.0 L920.5,53.0 L920.6,53.1 L920.8,53.1 L920.9,53.1 L921.1,53.1 L921.2,53.2 L921.4,53.2 L921.5,53.2 L921.7,53.2 L921.8,53.3 L922.0,53.3 L922.1,53.3 L922.3,53.3 L922.4,53.4 L922.5,53.4 L922.7,53.5 L922.8,53.5 L923.0,53.5 L923.1,53.6 L923.3,53.6 L923.4,53.7 L923.6,53.7 L923.7,53.7 L923.9,53.8 L924.0,53.8 L924.2,53.9 L924.3,54.0 L924.5,54.0 L924.6,54.1 L924.7,54.1 L924.9,54.2 L925.0,54.3 L925.2,54.3 L925.3,54.4 L925.5,54.5 L925.6,54.6 L925.8,54.7 L925.9,54.7 L926.1,54.8 L926.2,54.9 L926.4,55.0 L926.5,55.1 L926.7,55.2 L926.8,55.4 L927.0,55.5 L927.1,55.6 L927.2,55.7 L927.4,55.8 L927.5,56.0 L927.7,56.1 L927.8,56.3 L928.0,56.4 L928.1,56.6 L928.3,56.7 L928.4,56.9 L928.6,57.1 L928.7,57.2 L928.9,57.4 L929.0,57.6 L929.2,57.8 L929.3,58.0 L929.4,58.3 L929.6,58.5 L929.7,58.7 L929.9,58.9 L930.0,59.2 L930.2,59.4 L930.3,59.7 L930.5,60.0 L930.6,60.3 L930.8,60.5 L930.9,60.8 L931.1,61.1 L931.2,61.5 L931.4,61.8 L931.5,62.1 L931.7,62.5 L931.8,62.8 L931.9,63.2 L932.1,63.6 L932.2,63.9 L932.4,64.3 L932.5,64.7 L932.7,65.2 L932.8,65.6 L933.0,66.0 L933.1,66.5 L933.3,67.0 L933.4,67.4 L933.6,67.9 L933.7,68.4 L933.9,68.9 L934.0,69.5 L934.1,70.0 L934.3,70.6 L934.4,71.1 L934.6,71.7 L934.7,72.3 L934.9,73.0 L935.0,73.6 L935.2,74.3 L935.3,74.9 L935.5,75.6 L935.6,76.4 L935.8,77.1 L935.9,77.9 L936.1,78.7 L936.2,79.5 L936.3,80.3 L936.5,81.2 L936.6,82.1 L936.8,83.1 L936.9,84.1 L937.1,85.1 L937.2,86.2 L937.4,87.3 L937.5,88.5 L937.7,89.8 L937.8,91.2 L938.0,92.6 L938.1,94.2 L938.3,95.9 L938.4,97.8 L938.6,99.8 L938.7,102.1 L938.8,104.7 L939.0,107.8 L939.1,111.6 L939.3,116.4 L939.4,123.2 L939.6,127.6 L939.7,127.6 L939.9,127.6 L940.0,122.1 L940.2,116.4 L940.3,112.5 L940.5,109.4 L940.6,106.9 L940.8,104.8 L940.9,103.1 L941.0,101.5 L941.2,100.2 L941.3,99.0 L941.5,98.0 L941.6,97.0 L941.8,96.1 L941.9,95.3 L942.1,94.6 L942.2,93.9 L942.4,93.3 L942.5,92.8 L942.7,92.2 L942.8,91.8 L943.0,91.3 L943.1,90.9 L943.3,90.5 L943.4,90.2 L943.5,89.8 L943.7,89.5 L943.8,89.2 L944.0,89.0 L944.1,88.7 L944.3,88.5 L944.4,88.3 L944.6,88.1 L944.7,87.9 L944.9,87.8 L945.0,87.6 L945.2,87.5 L945.3,87.3 L945.5,87.2 L945.6,87.1 L945.7,87.0 L945.9,87.0 L946.0,86.9 L946.2,86.8 L946.3,86.8 L946.5,86.7 L946.6,86.7 L946.8,86.7 L946.9,86.7 L947.1,86.7 L947.2,86.7 L947.4,86.7 L947.5,86.7 L947.7,86.7 L947.8,86.8 L948.0,86.8 L948.1,86.8 L948.2,86.9 L948.4,87.0 L948.5,87.0 L948.7,87.1 L948.8,87.2 L949.0,87.3 L949.1,87.4 L949.3,87.5 L949.4,87.6 L949.6,87.7 L949.7,87.8 L949.9,87.9 L950.0,88.1 L950.2,88.2 L950.3,88.4 L950.4,88.5 L950.6,88.7 L950.7,88.8 L950.9,89.0 L951.0,89.2 L951.2,89.4 L951.3,89.6 L951.5,89.8 L951.6,90.0 L951.8,90.2 L951.9,90.4 L952.1,90.6 L952.2,90.9 L952.4,91.1 L952.5,91.4 L952.7,91.6 L952.8,91.9 L952.9,92.2 L953.1,92.5 L953.2,92.7 L953.4,93.0 L953.5,93.4 L953.7,93.7 L953.8,94.0 L954.0,94.4 L954.1,94.7 L954.3,95.1 L954.4,95.5 L954.6,95.8 L954.7,96.2 L954.9,96.7 L955.0,97.1 L955.1,97.5 L955.3,98.0 L955.4,98.5 L955.6,99.0 L955.7,99.5 L955.9,100.0 L956.0,100.6 L956.2,101.1 L956.3,101.7 L956.5,102.4 L956.6,103.0 L956.8,103.7 L956.9,104.4 L957.1,105.2 L957.2,106.0 L957.3,106.8 L957.5,107.7 L957.6,108.6 L957.8,109.6 L957.9,110.7 L958.1,111.8 L958.2,113.1 L958.4,114.4 L958.5,115.9 L958.7,117.5 L958.8,119.4 L959.0,121.4 L959.1,123.8 L959.3,126.7 L959.4,130.1 L959.6,134.6 L959.7,140.9 L959.8,151.8 L960.0,172.0 L960.1,150.8 L960.3,140.5 L960.4,134.4 L960.6,130.1 L960.7,126.7 L960.9,124.0 L961.0,121.7 L961.2,119.7 L961.3,117.9 L961.5,116.4 L961.6,115.0 L961.8,113.7 L961.9,112.5 L962.0,111.4 L962.2,110.4 L962.3,109.4 L962.5,108.6 L962.6,107.7 L962.8,107.0 L962.9,106.2 L963.1,105.5 L963.2,104.9 L963.4,104.2 L963.5,103.6 L963.7,103.1 L963.8,102.5 L964.0,102.0 L964.1,101.5 L964.3,101.0 L964.4,100.5 L964.5,100.1 L964.7,99.7 L964.8,99.2 L965.0,98.8 L965.1,98.5 L965.3,98.1 L965.4,97.7 L965.6,97.4 L965.7,97.0 L965.9,96.7 L966.0,96.4 L966.2,96.1 L966.3,95.8 L966.5,95.5 L966.6,95.2 L966.7,95.0 L966.9,94.7 L967.0,94.4 L967.2,94.2 L967.3,94.0 L967.5,93.7 L967.6,93.5 L967.8,93.3 L967.9,93.1 L968.1,92.8 L968.2,92.6 L968.4,92.4 L968.5,92.2 L968.7,92.1 L968.8,91.9 L969.0,91.7 L969.1,91.5 L969.2,91.4 L969.4,91.2 L969.5,91.0 L969.7,90.9 L969.8,90.7 L970.0,90.6 L970.1,90.4 L970.3,90.3 L970.4,90.2 L970.6,90.0 L970.7,89.9 L970.9,89.8 L971.0,89.6 L971.2,89.5 L971.3,89.4 L971.4,89.3 L971.6,89.2 L971.7,89.1 L971.9,89.0 L972.0,88.9 L972.2,88.8 L972.3,88.7 L972.5,88.6 L972.6,88.5 L972.8,88.4 L972.9,88.3 L973.1,88.2 L973.2,88.2 L973.4,88.1 L973.5,88.0 L973.6,87.9 L973.8,87.9 L973.9,87.8 L974.1,87.7 L974.2,87.7 L974.4,87.6 L974.5,87.6 L974.7,87.5 L974.8,87.4 L975.0,87.4 L975.1,87.3 L975.3,87.3 L975.4,87.2 L975.6,87.2 L975.7,87.2 L975.9,87.1 L976.0,87.1 L976.1,87.0 L976.3,87.0 L976.4,87.0 L976.6,86.9 L976.7,86.9 L976.9,86.9 L977.0,86.9 L977.2,86.8 L977.3,86.8 L977.5,86.8 L977.6,86.8 L977.8,86.8 L977.9,86.7 L978.1,86.7 L978.2,86.7 L978.3,86.7 L978.5,86.7 L978.6,86.7 L978.8,86.7 L978.9,86.7 L979.1,86.7 L979.2,86.7 L979.4,86.7 L979.5,86.7 L979.7,86.7 L979.8,86.7 L980.0,86.7 L980.1,86.7 L980.3,86.7 L980.4,86.7 L980.6,86.7 L980.7,86.7 L980.8,86.7 L981.0,86.8 L981.1,86.8 L981.3,86.8 L981.4,86.8 L981.6,86.8 L981.7,86.9 L981.9,86.9 L982.0,86.9 L982.2,86.9 L982.3,87.0 L982.5,87.0 L982.6,87.0 L982.8,87.1 L982.9,87.1 L983.0,87.1 L983.2,87.2 L983.3,87.2 L983.5,87.2 L983.6,87.3 L983.8,87.3 L983.9,87.4 L984.1,87.4 L984.2,87.5 L984.4,87.5 L984.5,87.6 L984.7,87.6 L984.8,87.7 L985.0,87.7 L985.1,87.8 L985.3,87.8 L985.4,87.9 L985.5,87.9 L985.7,88.0 L985.8,88.0 L986.0,88.1 L986.1,88.2 L986.3,88.2 L986.4,88.3 L986.6,88.4 L986.7,88.4 L986.9,88.5 L987.0,88.6 L987.2,88.7 L987.3,88.7 L987.5,88.8 L987.6,88.9 L987.7,89.0 L987.9,89.0 L988.0,89.1 L988.2,89.2 L988.3,89.3 L988.5,89.4 L988.6,89.5 L988.8,89.6 L988.9,89.7 L989.1,89.7 L989.2,89.8 L989.4,89.9 L989.5,90.0 L989.7,90.1 L989.8,90.2 L989.9,90.3 L990.1,90.4 L990.2,90.5 L990.4,90.7 L990.5,90.8 L990.7,90.9 L990.8,91.0 L991.0,91.1 L991.1,91.2 L991.3,91.3 L991.4,91.5 L991.6,91.6 L991.7,91.7 L991.9,91.8 L992.0,91.9 L992.2,92.1 L992.3,92.2 L992.4,92.3 L992.6,92.5 L992.7,92.6 L992.9,92.8 L993.0,92.9 L993.2,93.0 L993.3,93.2 L993.5,93.3 L993.6,93.5 L993.8,93.6 L993.9,93.8 L994.1,93.9 L994.2,94.1 L994.4,94.3 L994.5,94.4 L994.6,94.6 L994.8,94.8 L994.9,94.9 L995.1,95.1 L995.2,95.3 L995.4,95.5 L995.5,95.6 L995.7,95.8 L995.8,96.0 L996.0,96.2 L996.1,96.4 L996.3,96.6 L996.4,96.8 L996.6,97.0 L996.7,97.2 L996.9,97.4 L997.0,97.6 L997.1,97.8 L997.3,98.1 L997.4,98.3 L997.6,98.5 L997.7,98.8 L997.9,99.0 L998.0,99.2 L998.2,99.5 L998.3,99.7 L998.5,100.0 L998.6,100.2 L998.8,100.5 L998.9,100.8 L999.1,101.1 L999.2,101.3 L999.3,101.6 L999.5,101.9 L999.6,102.2 L999.8,102.5 L999.9,102.8 L1000.1,103.2 L1000.2,103.5 L1000.4,103.8 L1000.5,104.2 L1000.7,104.5 L1000.8,104.9 L1001.0,105.2 L1001.1,105.6 L1001.3,106.0 L1001.4,106.4 L1001.6,106.8 L1001.7,107.2 L1001.8,107.6 L1002.0,108.1 L1002.1,108.5 L1002.3,109.0 L1002.4,109.5 L1002.6,110.0 L1002.7,110.5 L1002.9,111.1 L1003.0,111.6 L1003.2,112.2 L1003.3,112.8 L1003.5,113.4 L1003.6,114.1 L1003.8,114.7 L1003.9,115.4 L1004.0,116.2 L1004.2,117.0 L1004.3,117.8 L1004.5,118.7 L1004.6,119.6 L1004.8,120.6 L1004.9,121.6 L1005.1,122.7 L1005.2,123.9 L1005.4,125.2 L1005.5,126.7 L1005.7,128.3 L1005.8,130.0 L1006.0,132.0 L1006.1,134.3 L1006.3,137.0 L1006.4,140.2 L1006.5,144.3 L1006.7,149.9 L1006.8,154.0 L1007.0,154.0 L1007.1,154.0 L1007.3,153.9 L1007.4,147.0 L1007.6,142.2 L1007.7,138.6 L1007.9,135.7 L1008.0,133.3 L1008.2,131.2 L1008.3,129.3 L1008.5,127.7 L1008.6,126.2 L1008.7,124.9 L1008.9,123.6 L1009.0,122.5 L1009.2,121.4 L1009.3,120.4 L1009.5,119.5 L1009.6,118.7 L1009.8,117.8 L1009.9,117.1 L1010.1,116.3 L1010.2,115.6 L1010.4,114.9 L1010.5,114.3 L1010.7,113.7 L1010.8,113.1 L1010.9,112.5 L1011.1,112.0 L1011.2,111.5 L1011.4,111.0 L1011.5,110.5 L1011.7,110.0 L1011.8,109.6 L1012.0,109.1 L1012.1,108.7 L1012.3,108.3 L1012.4,107.9 L1012.6,107.5 L1012.7,107.1 L1012.9,106.7 L1013.0,106.4 L1013.2,106.0 L1013.3,105.7 L1013.4,105.4 L1013.6,105.0 L1013.7,104.7 L1013.9,104.4 L1014.0,104.1 L1014.2,103.8 L1014.3,103.5 L1014.5,103.2 L1014.6,103.0 L1014.8,102.7 L1014.9,102.4 L1015.1,102.2 L1015.2,101.9 L1015.4,101.7 L1015.5,101.4 L1015.6,101.2 L1015.8,101.0 L1015.9,100.7 L1016.1,100.5 L1016.2,100.3 L1016.4,100.1 L1016.5,99.9 L1016.7,99.7 L1016.8,99.5 L1017.0,99.3 L1017.1,99.1 L1017.3,98.9 L1017.4,98.7 L1017.6,98.5 L1017.7,98.3 L1017.9,98.1 L1018.0,97.9 L1018.1,97.8 L1018.3,97.6 L1018.4,97.4 L1018.6,97.3 L1018.7,97.1 L1018.9,96.9 L1019.0,96.8 L1019.2,96.6 L1019.3,96.5 L1019.5,96.3 L1019.6,96.2 L1019.8,96.0 L1019.9,95.9 L1020.1,95.7 L1020.2,95.6 L1020.3,95.4 L1020.5,95.3 L1020.6,95.2 L1020.8,95.0 L1020.9,94.9 L1021.1,94.8 L1021.2,94.7 L1021.4,94.5 L1021.5,94.4 L1021.7,94.3 L1021.8,94.2 L1022.0,94.0 L1022.1,93.9 L1022.3,93.8 L1022.4,93.7 L1022.6,93.6 L1022.7,93.5 L1022.8,93.4 L1023.0,93.3 L1023.1,93.1 L1023.3,93.0 L1023.4,92.9 L1023.6,92.8 L1023.7,92.7 L1023.9,92.6 L1024.0,92.5 L1024.2,92.4 L1024.3,92.3 L1024.5,92.3 L1024.6,92.2 L1024.8,92.1 L1024.9,92.0 L1025.0,91.9 L1025.2,91.8 L1025.3,91.7 L1025.5,91.6 L1025.6,91.5 L1025.8,91.5 L1025.9,91.4 L1026.1,91.3 L1026.2,91.2 L1026.4,91.1 L1026.5,91.1 L1026.7,91.0 L1026.8,90.9 L1027.0,90.8 L1027.1,90.8 L1027.2,90.7 L1027.4,90.6 L1027.5,90.5 L1027.7,90.5 L1027.8,90.4 L1028.0,90.3 L1028.1,90.3 L1028.3,90.2 L1028.4,90.1 L1028.6,90.1 L1028.7,90.0 L1028.9,89.9 L1029.0,89.9 L1029.2,89.8 L1029.3,89.8 L1029.5,89.7 L1029.6,89.6 L1029.7,89.6 L1029.9,89.5 L1030.0,89.5 L1030.2,89.4 L1030.3,89.3 L1030.5,89.3 L1030.6,89.2 L1030.8,89.2 L1030.9,89.1 L1031.1,89.1 L1031.2,89.0 L1031.4,89.0 L1031.5,88.9 L1031.7,88.9 L1031.8,88.8 L1031.9,88.8 L1032.1,88.7 L1032.2,88.7 L1032.4,88.6 L1032.5,88.6 L1032.7,88.6 L1032.8,88.5 L1033.0,88.5 L1033.1,88.4 L1033.3,88.4 L1033.4,88.3 L1033.6,88.3 L1033.7,88.3 L1033.9,88.2 L1034.0,88.2 L1034.2,88.1 L1034.3,88.1 L1034.4,88.1 L1034.6,88.0 L1034.7,88.0 L1034.9,88.0 L1035.0,87.9 L1035.2,87.9 L1035.3,87.9 L1035.5,87.8 L1035.6,87.8 L1035.8,87.8 L1035.9,87.7 L1036.1,87.7 L1036.2,87.7 L1036.4,87.6 L1036.5,87.6 L1036.6,87.6 L1036.8,87.6 L1036.9,87.5 L1037.1,87.5 L1037.2,87.5 L1037.4,87.4 L1037.5,87.4 L1037.7,87.4 L1037.8,87.4 L1038.0,87.3 L1038.1,87.3 L1038.3,87.3 L1038.4,87.3 L1038.6,87.3 L1038.7,87.2 L1038.9,87.2 L1039.0,87.2 L1039.1,87.2 L1039.3,87.1 L1039.4,87.1 L1039.6,87.1 L1039.7,87.1 L1039.9,87.1 L1040.0,87.1 L1040.2,87.0 L1040.3,87.0 L1040.5,87.0 L1040.6,87.0 L1040.8,87.0 L1040.9,87.0 L1041.1,86.9 L1041.2,86.9 L1041.3,86.9 L1041.5,86.9 L1041.6,86.9 L1041.8,86.9 L1041.9,86.9 L1042.1,86.8 L1042.2,86.8 L1042.4,86.8 L1042.5,86.8 L1042.7,86.8 L1042.8,86.8 L1043.0,86.8 L1043.1,86.8 L1043.3,86.8 L1043.4,86.8 L1043.6,86.7 L1043.7,86.7 L1043.8,86.7 L1044.0,86.7 L1044.1,86.7 L1044.3,86.7 L1044.4,86.7 L1044.6,86.7 L1044.7,86.7 L1044.9,86.7 L1045.0,86.7 L1045.2,86.7 L1045.3,86.7 L1045.5,86.7 L1045.6,86.7 L1045.8,86.7 L1045.9,86.7 L1046.0,86.7 L1046.2,86.7 L1046.3,86.7 L1046.5,86.7 L1046.6,86.7 L1046.8,86.7 L1046.9,86.7 L1047.1,86.7 L1047.2,86.7 L1047.4,86.7 L1047.5,86.7 L1047.7,86.7 L1047.8,86.7 L1048.0,86.7 L1048.1,86.7 L1048.2,86.7 L1048.4,86.7 L1048.5,86.7 L1048.7,86.7 L1048.8,86.7" fill="none" stroke="#2a2ae8" stroke-width="1.1"/>
 <path d="M880.2,132.1 L881.2,130.8 L882.2,129.6 L883.2,128.4 L884.2,127.1 L885.2,125.9 L886.2,124.6 L887.2,123.3 L888.2,122.1 L889.2,120.8 L890.2,119.5 L891.2,118.2 L892.2,116.8 L893.2,115.5 L894.2,114.2 L895.2,112.8 L896.2,111.4 L897.2,110.1 L898.2,108.7 L899.3,107.3 L900.3,105.8 L901.3,104.4 L902.3,102.9 L903.3,101.5 L904.3,100.0 L905.3,98.5 L906.3,97.0 L907.3,95.4 L908.3,93.9 L909.3,92.3 L910.3,90.7 L911.3,89.1 L912.3,87.4 L913.3,85.7 L914.3,84.0 L915.3,82.3 L916.3,80.5 L917.3,78.8 L918.3,77.0 L919.3,75.1 L920.3,73.3 L921.3,71.4 L922.3,69.5 L923.3,67.7 L924.3,65.8 L925.4,64.0 L926.4,62.2 L927.4,60.5 L928.4,58.9 L929.4,57.5 L930.4,56.2 L931.4,55.2 L932.4,54.3 L933.4,53.7 L934.4,53.2 L935.4,52.9 L936.4,52.7 L937.4,52.6 L938.4,52.5 L939.4,52.5 L940.4,52.5 L941.4,52.5 L942.4,52.5 L943.4,52.6 L944.4,52.6 L945.4,52.6 L946.4,52.6 L947.4,52.6 L948.4,52.6 L949.4,52.6 L950.5,52.6 L951.5,52.6 L952.5,52.5 L953.5,52.5 L954.5,52.5 L955.5,52.5 L956.5,52.5 L957.5,52.5 L958.5,52.5 L959.5,52.5 L960.5,52.5 L961.5,52.5 L962.5,52.5 L963.5,52.5 L964.5,52.5 L965.5,52.5 L966.5,52.5 L967.5,52.5 L968.5,52.5 L969.5,52.5 L970.5,52.6 L971.5,52.6 L972.5,52.6 L973.5,52.6 L974.5,52.6 L975.5,52.6 L976.6,52.6 L977.6,52.6 L978.6,52.6 L979.6,52.6 L980.6,52.6 L981.6,52.6 L982.6,52.6 L983.6,52.6 L984.6,52.6 L985.6,52.6 L986.6,52.6 L987.6,52.6 L988.6,52.6 L989.6,52.6 L990.6,52.6 L991.6,52.5 L992.6,52.5 L993.6,52.5 L994.6,52.5 L995.6,52.5 L996.6,52.5 L997.6,52.5 L998.6,52.5 L999.6,52.5 L1000.6,52.5 L1001.7,52.5 L1002.7,52.5 L1003.7,52.5 L1004.7,52.5 L1005.7,52.5 L1006.7,52.5 L1007.7,52.5 L1008.7,52.5 L1009.7,52.5 L1010.7,52.5 L1011.7,52.5 L1012.7,52.5 L1013.7,52.5 L1014.7,52.5 L1015.7,52.5 L1016.7,52.5 L1017.7,52.5 L1018.7,52.5 L1019.7,52.5 L1020.7,52.5 L1021.7,52.5 L1022.7,52.5 L1023.7,52.5 L1024.7,52.5 L1025.7,52.5 L1026.8,52.6 L1027.8,52.6 L1028.8,52.6 L1029.8,52.6 L1030.8,52.6 L1031.8,52.6 L1032.8,52.6 L1033.8,52.6 L1034.8,52.6 L1035.8,52.6 L1036.8,52.6 L1037.8,52.6 L1038.8,52.6 L1039.8,52.6 L1040.8,52.6 L1041.8,52.6 L1042.8,52.6 L1043.8,52.6 L1044.8,52.6 L1045.8,52.6 L1046.8,52.6 L1047.8,52.6 L1048.8,52.6" fill="none" stroke="#2a2ae8" stroke-width="1.1"/>
 <rect x="608" y="50" width="3" height="356" fill="#0000ff"/>
 <rect x="1047" y="50" width="3" height="356" fill="#0000ff"/>
 <rect x="608" y="402.5" width="442" height="3" fill="#0000ff"/>
 <rect x="608" y="50" width="442" height="2.5" fill="#0808c0"/>
 <path d="M609.0,52.5 L609.1,52.5 L610.1,52.5 L611.1,52.5 L612.1,52.5 L613.1,52.5 L614.1,52.5 L615.1,52.5 L616.1,52.5 L617.1,52.5 L618.1,52.5 L619.2,52.5 L620.2,52.5 L621.2,52.5 L622.2,52.5 L623.2,52.5 L624.2,52.5 L625.2,52.5 L626.2,52.5 L627.2,52.5 L628.2,52.5 L629.2,52.5 L630.2,52.5 L631.2,52.5 L632.2,52.5 L633.2,52.5 L634.2,52.5 L635.2,52.5 L636.2,52.5 L637.2,52.5 L638.2,52.5 L639.2,52.5 L640.2,52.5 L641.2,52.5 L642.2,52.5 L643.2,52.5 L644.3,52.5 L645.3,52.5 L646.3,52.5 L647.3,52.5 L648.3,52.5 L649.3,52.5 L650.3,52.5 L651.3,52.5 L652.3,52.5 L653.3,52.5 L654.3,52.5 L655.3,52.5 L656.3,52.5 L657.3,52.5 L658.3,52.5 L659.3,52.5 L660.3,52.5 L661.3,52.5 L662.3,52.5 L663.3,52.5 L664.3,52.5 L665.3,52.5 L666.3,52.5 L667.3,52.5 L668.3,52.5 L669.3,52.5 L670.4,52.5 L671.4,52.5 L672.4,52.5 L673.4,52.5 L674.4,52.5 L675.4,52.5 L676.4,52.5 L677.4,52.5 L678.4,52.5 L679.4,52.5 L680.4,52.5 L681.4,52.5 L682.4,52.5 L683.4,52.5 L684.4,52.5 L685.4,52.5 L686.4,52.5 L687.4,52.5 L688.4,52.5 L689.4,52.5 L690.4,52.5 L691.4,52.5 L692.4,52.5 L693.4,52.5 L694.4,52.5 L695.5,52.5 L696.5,52.5 L697.5,52.5 L698.5,52.5 L699.5,52.5 L700.5,52.5 L701.5,52.5 L702.5,52.5 L703.5,52.5 L704.5,52.5 L705.5,52.5 L706.5,52.5 L707.5,52.5 L708.5,52.5 L709.5,52.5 L710.5,52.5 L711.5,52.5 L712.5,52.5 L713.5,52.5 L714.5,52.5 L715.5,52.5 L716.5,52.5 L717.5,52.5 L718.5,52.5 L719.5,52.5 L720.6,52.5 L721.6,52.5 L722.6,52.5 L723.6,52.5 L724.6,52.5 L725.6,52.5 L726.6,52.5 L727.6,52.5 L728.6,52.5 L729.6,52.5 L730.6,52.5 L731.6,52.5 L732.6,52.5 L733.6,52.5 L734.6,52.5 L735.6,52.5 L736.6,52.5 L737.6,52.5 L738.6,52.5 L739.6,52.5 L740.6,52.5 L741.6,52.5 L742.6,52.5 L743.6,52.5 L744.6,52.5 L745.6,52.5 L746.7,52.5 L747.7,52.5 L748.7,52.5 L749.7,52.5 L750.7,52.5 L751.7,52.5 L752.7,52.5 L753.7,52.5 L754.7,52.5 L755.7,52.5 L756.7,52.5 L757.7,52.5 L758.7,52.5 L759.7,52.5 L760.7,52.5 L761.7,52.5 L762.7,52.5 L763.7,52.5 L764.7,52.5 L765.7,52.5 L766.7,52.5 L767.7,52.5 L768.7,52.5 L769.7,52.5 L770.7,52.5 L771.8,52.5 L772.8,52.5 L773.8,52.5 L774.8,52.5 L775.8,52.5 L776.8,52.5 L777.8,52.5 L778.8,52.5 L779.8,52.5 L780.8,52.5 L781.8,52.5 L782.8,52.5 L783.8,52.5 L784.8,52.5 L785.8,52.5 L786.8,52.5 L787.8,52.5 L788.8,52.5 L789.8,52.5 L790.8,52.5 L791.8,52.5 L792.8,52.5 L793.8,52.5 L794.8,52.5 L795.8,52.5 L796.8,52.5 L797.9,52.5 L798.9,52.5 L799.9,52.5 L800.9,52.5 L801.9,52.5 L802.9,52.5 L803.9,52.5 L804.9,52.5 L805.9,52.5 L806.9,52.5 L807.9,52.5 L808.9,52.5 L809.9,52.5 L810.9,52.5 L811.9,52.5 L812.9,52.5 L813.9,52.5 L814.9,52.5 L815.9,52.5 L816.9,52.5 L817.9,52.5 L818.9,52.5 L819.9,52.5 L820.9,52.5 L821.9,52.5 L823.0,52.5 L824.0,52.5 L825.0,52.5 L826.0,52.5 L827.0,52.5 L828.0,52.5 L829.0,52.5 L830.0,52.5 L831.0,52.5 L832.0,52.5 L833.0,52.5 L834.0,52.5 L835.0,52.5 L836.0,52.5 L837.0,52.5 L838.0,52.5 L839.0,52.5 L840.0,52.5 L841.0,52.5 L842.0,52.5 L843.0,52.5 L844.0,52.5 L845.0,52.5 L846.0,52.5 L847.0,52.5 L848.1,52.5 L849.1,52.5 L850.1,52.5 L851.1,52.5 L852.1,52.5 L853.1,52.5 L854.1,52.5 L855.1,52.5 L856.1,52.5 L857.1,52.5 L858.1,52.5 L859.1,52.5 L860.1,52.5 L861.1,52.5 L862.1,52.5 L863.1,52.5 L864.1,52.5 L865.1,52.5 L866.1,52.5 L867.1,52.5 L868.1,52.5 L869.1,52.5 L870.1,52.5 L871.1,52.5 L872.1,52.5 L873.1,52.5 L874.2,52.5 L875.2,52.5 L876.2,52.5 L877.2,52.5 L878.2,52.5 L879.2,52.5 L880.2,52.5 L881.2,52.5 L882.2,52.5 L883.2,52.5 L884.2,52.5 L885.2,52.5 L886.2,52.5 L887.2,52.5 L888.2,52.5 L889.2,52.5 L890.2,52.5 L891.2,52.5 L892.2,52.5 L893.2,52.5 L894.2,52.5 L895.2,52.5 L896.2,52.5 L897.2,52.5 L898.2,52.5 L899.3,52.5 L900.3,52.5 L901.3,52.5 L902.3,52.5 L903.3,52.5 L904.3,52.5 L905.3,52.5 L906.3,52.5 L907.3,52.5 L908.3,52.5 L909.3,52.5 L910.3,52.5 L911.3,52.6 L912.3,52.6 L913.3,52.6 L914.3,52.6 L915.3,52.6 L916.3,52.7 L917.3,52.7 L918.3,52.8 L919.3,52.8 L920.3,52.9 L921.3,53.1 L922.3,53.2 L923.3,53.5 L924.3,53.8 L925.4,54.2 L926.4,54.7 L927.4,55.4 L928.4,56.4 L929.4,57.6 L930.4,59.2 L931.4,61.3 L932.4,63.8 L933.4,67.0 L934.4,70.8 L935.4,75.6 L936.4,81.7 L937.4,89.8 L938.4,100.7 L939.4,101.6 L940.4,93.7 L941.4,88.6 L942.4,85.5 L943.4,83.4 L944.4,82.1 L945.4,81.3 L946.4,80.9 L947.4,80.8 L948.4,81.0 L949.4,81.4 L950.5,81.9 L951.5,82.7 L952.5,83.7 L953.5,84.8 L954.5,86.0 L955.5,87.5 L956.5,89.1 L957.5,90.9 L958.5,92.8 L959.5,94.8 L960.5,96.7 L961.5,98.4 L962.5,99.6 L963.5,100.1 L964.5,99.9 L965.5,99.1 L966.5,98.0 L967.5,96.7 L968.5,95.5 L969.5,94.4 L970.5,93.5 L971.5,92.6 L972.5,91.9 L973.5,91.3 L974.5,90.8 L975.5,90.5 L976.6,90.2 L977.6,90.0 L978.6,90.0 L979.6,90.0 L980.6,90.1 L981.6,90.3 L982.6,90.5 L983.6,90.9 L984.6,91.3 L985.6,91.8 L986.6,92.4 L987.6,93.0 L988.6,93.8 L989.6,94.7 L990.6,95.6 L991.6,96.7 L992.6,97.8 L993.6,99.1 L994.6,100.4 L995.6,101.9 L996.6,103.3 L997.6,104.7 L998.6,106.0 L999.6,106.9 L1000.6,107.3 L1001.7,107.0 L1002.7,106.2 L1003.7,105.0 L1004.7,103.6 L1005.7,102.1 L1006.7,100.5 L1007.7,99.1 L1008.7,97.7 L1009.7,96.4 L1010.7,95.3 L1011.7,94.1 L1012.7,93.1 L1013.7,92.2 L1014.7,91.3 L1015.7,90.5 L1016.7,89.8 L1017.7,89.1 L1018.7,88.4 L1019.7,87.8 L1020.7,87.3 L1021.7,86.8 L1022.7,86.3 L1023.7,85.8 L1024.7,85.4 L1025.7,85.1 L1026.8,84.7 L1027.8,84.4 L1028.8,84.1 L1029.8,83.8 L1030.8,83.6 L1031.8,83.4 L1032.8,83.2 L1033.8,83.0 L1034.8,82.8 L1035.8,82.7 L1036.8,82.5 L1037.8,82.4 L1038.8,82.3 L1039.8,82.3 L1040.8,82.2 L1041.8,82.2 L1042.8,82.1 L1043.8,82.1 L1044.8,82.1 L1045.8,82.1 L1046.8,82.1 L1047.8,82.2 L1048.8,82.2" fill="none" stroke="#44ee44" stroke-width="2"/>
 <path d="M609.0,391.2 L609.1,390.3 L610.1,389.4 L611.1,388.5 L612.1,387.7 L613.1,386.8 L614.1,385.9 L615.1,385.0 L616.1,384.1 L617.1,383.2 L618.1,382.4 L619.2,381.5 L620.2,380.6 L621.2,379.7 L622.2,378.8 L623.2,377.9 L624.2,377.1 L625.2,376.2 L626.2,375.3 L627.2,374.4 L628.2,373.5 L629.2,372.6 L630.2,371.7 L631.2,370.9 L632.2,370.0 L633.2,369.1 L634.2,368.2 L635.2,367.3 L636.2,366.4 L637.2,365.6 L638.2,364.7 L639.2,363.8 L640.2,362.9 L641.2,362.0 L642.2,361.1 L643.2,360.2 L644.3,359.4 L645.3,358.5 L646.3,357.6 L647.3,356.7 L648.3,355.8 L649.3,354.9 L650.3,354.0 L651.3,353.1 L652.3,352.3 L653.3,351.4 L654.3,350.5 L655.3,349.6 L656.3,348.7 L657.3,347.8 L658.3,346.9 L659.3,346.0 L660.3,345.2 L661.3,344.3 L662.3,343.4 L663.3,342.5 L664.3,341.6 L665.3,340.7 L666.3,339.8 L667.3,338.9 L668.3,338.0 L669.3,337.1 L670.4,336.3 L671.4,335.4 L672.4,334.5 L673.4,333.6 L674.4,332.7 L675.4,331.8 L676.4,330.9 L677.4,330.0 L678.4,329.1 L679.4,328.2 L680.4,327.3 L681.4,326.4 L682.4,325.6 L683.4,324.7 L684.4,323.8 L685.4,322.9 L686.4,322.0 L687.4,321.1 L688.4,320.2 L689.4,319.3 L690.4,318.4 L691.4,317.5 L692.4,316.6 L693.4,315.7 L694.4,314.8 L695.5,313.9 L696.5,313.0 L697.5,312.1 L698.5,311.2 L699.5,310.3 L700.5,309.4 L701.5,308.5 L702.5,307.6 L703.5,306.7 L704.5,305.8 L705.5,304.9 L706.5,304.0 L707.5,303.1 L708.5,302.2 L709.5,301.3 L710.5,300.4 L711.5,299.5 L712.5,298.6 L713.5,297.7 L714.5,296.8 L715.5,295.9 L716.5,295.0 L717.5,294.1 L718.5,293.2 L719.5,292.3 L720.6,291.4 L721.6,290.5 L722.6,289.6 L723.6,288.7 L724.6,287.8 L725.6,286.9 L726.6,286.0 L727.6,285.1 L728.6,284.1 L729.6,283.2 L730.6,282.3 L731.6,281.4 L732.6,280.5 L733.6,279.6 L734.6,278.7 L735.6,277.8 L736.6,276.9 L737.6,276.0 L738.6,275.0 L739.6,274.1 L740.6,273.2 L741.6,272.3 L742.6,271.4 L743.6,270.5 L744.6,269.6 L745.6,268.6 L746.7,267.7 L747.7,266.8 L748.7,265.9 L749.7,265.0 L750.7,264.0 L751.7,263.1 L752.7,262.2 L753.7,261.3 L754.7,260.4 L755.7,259.4 L756.7,258.5 L757.7,257.6 L758.7,256.7 L759.7,255.7 L760.7,254.8 L761.7,253.9 L762.7,253.0 L763.7,252.0 L764.7,251.1 L765.7,250.2 L766.7,249.2 L767.7,248.3 L768.7,247.4 L769.7,246.5 L770.7,245.5 L771.8,244.6 L772.8,243.6 L773.8,242.7 L774.8,241.8 L775.8,240.8 L776.8,239.9 L777.8,239.0 L778.8,238.0 L779.8,237.1 L780.8,236.1 L781.8,235.2 L782.8,234.2 L783.8,233.3 L784.8,232.4 L785.8,231.4 L786.8,230.5 L787.8,229.5 L788.8,228.6 L789.8,227.6 L790.8,226.7 L791.8,225.7 L792.8,224.7 L793.8,223.8 L794.8,222.8 L795.8,221.9 L796.8,220.9 L797.9,220.0 L798.9,219.0 L799.9,218.0 L800.9,217.1 L801.9,216.1 L802.9,215.1 L803.9,214.2 L804.9,213.2 L805.9,212.2 L806.9,211.2 L807.9,210.3 L808.9,209.3 L809.9,208.3 L810.9,207.3 L811.9,206.4 L812.9,205.4 L813.9,204.4 L814.9,203.4 L815.9,202.4 L816.9,201.4 L817.9,200.4 L818.9,199.4 L819.9,198.5 L820.9,197.5 L821.9,196.5 L823.0,195.5 L824.0,194.5 L825.0,193.5 L826.0,192.4 L827.0,191.4 L828.0,190.4 L829.0,189.4 L830.0,188.4 L831.0,187.4 L832.0,186.4 L833.0,185.3 L834.0,184.3 L835.0,183.3 L836.0,182.3 L837.0,181.2 L838.0,180.2 L839.0,179.2 L840.0,178.1 L841.0,177.1 L842.0,176.0 L843.0,175.0 L844.0,173.9 L845.0,172.9 L846.0,171.8 L847.0,170.8 L848.1,169.7 L849.1,168.6 L850.1,167.6 L851.1,166.5 L852.1,165.4 L853.1,164.4 L854.1,163.3 L855.1,162.2 L856.1,161.1 L857.1,160.0 L858.1,158.9 L859.1,157.8 L860.1,156.7 L861.1,155.6 L862.1,154.5 L863.1,153.3 L864.1,152.2 L865.1,151.1 L866.1,150.0 L867.1,148.8 L868.1,147.7 L869.1,146.5 L870.1,145.4 L871.1,144.2 L872.1,143.1 L873.1,141.9 L874.2,140.7 L875.2,139.5 L876.2,138.3 L877.2,137.1 L878.2,135.9 L879.2,134.7 L880.2,133.5 L881.2,132.3 L882.2,131.1 L883.2,129.8 L884.2,128.6 L885.2,127.3 L886.2,126.1 L887.2,124.8 L888.2,123.5 L889.2,122.2 L890.2,120.9 L891.2,119.6 L892.2,118.3 L893.2,116.9 L894.2,115.6 L895.2,114.2 L896.2,112.9 L897.2,111.5 L898.2,110.1 L899.3,108.7 L900.3,107.3 L901.3,105.8 L902.3,104.4 L903.3,102.9 L904.3,101.4 L905.3,99.9 L906.3,98.4 L907.3,96.8 L908.3,95.3 L909.3,93.7 L910.3,92.1 L911.3,90.5 L912.3,88.8 L913.3,87.1 L914.3,85.4 L915.3,83.7 L916.3,81.9 L917.3,80.1 L918.3,78.3 L919.3,76.4 L920.3,74.6 L921.3,72.7 L922.3,70.7 L923.3,68.8 L924.3,66.9 L925.4,65.0 L926.4,63.1 L927.4,61.3 L928.4,59.6 L929.4,58.0 L930.4,56.6 L931.4,55.4 L932.4,54.5 L933.4,53.7 L934.4,53.2 L935.4,52.9 L936.4,52.7 L937.4,52.6 L938.4,52.5 L939.4,52.5 L940.4,52.5 L941.4,52.6 L942.4,52.6 L943.4,52.6 L944.4,52.7 L945.4,52.7 L946.4,52.7 L947.4,52.7 L948.4,52.7 L949.4,52.7 L950.5,52.7 L951.5,52.6 L952.5,52.6 L953.5,52.6 L954.5,52.6 L955.5,52.6 L956.5,52.6 L957.5,52.6 L958.5,52.5 L959.5,52.5 L960.5,52.5 L961.5,52.5 L962.5,52.5 L963.5,52.5 L964.5,52.5 L965.5,52.5 L966.5,52.5 L967.5,52.5 L968.5,52.5 L969.5,52.5 L970.5,52.5 L971.5,52.5 L972.5,52.5 L973.5,52.5 L974.5,52.6 L975.5,52.6 L976.6,52.6 L977.6,52.6 L978.6,52.6 L979.6,52.6 L980.6,52.6 L981.6,52.6 L982.6,52.6 L983.6,52.6 L984.6,52.5 L985.6,52.5 L986.6,52.5 L987.6,52.5 L988.6,52.5 L989.6,52.5 L990.6,52.5 L991.6,52.5 L992.6,52.5 L993.6,52.5 L994.6,52.5 L995.6,52.5 L996.6,52.5 L997.6,52.5 L998.6,52.5 L999.6,52.5 L1000.6,52.5 L1001.7,52.5 L1002.7,52.5 L1003.7,52.5 L1004.7,52.5 L1005.7,52.5 L1006.7,52.5 L1007.7,52.5 L1008.7,52.5 L1009.7,52.5 L1010.7,52.5 L1011.7,52.5 L1012.7,52.5 L1013.7,52.5 L1014.7,52.5 L1015.7,52.6 L1016.7,52.6 L1017.7,52.6 L1018.7,52.6 L1019.7,52.6 L1020.7,52.6 L1021.7,52.6 L1022.7,52.6 L1023.7,52.6 L1024.7,52.6 L1025.7,52.6 L1026.8,52.6 L1027.8,52.6 L1028.8,52.6 L1029.8,52.6 L1030.8,52.6 L1031.8,52.6 L1032.8,52.6 L1033.8,52.6 L1034.8,52.6 L1035.8,52.6 L1036.8,52.7 L1037.8,52.7 L1038.8,52.7 L1039.8,52.7 L1040.8,52.7 L1041.8,52.7 L1042.8,52.7 L1043.8,52.7 L1044.8,52.7 L1045.8,52.7 L1046.8,52.7 L1047.8,52.7 L1048.8,52.7" fill="none" stroke="#f8f84c" stroke-width="2"/>
 <g font-size="10.5" fill="#e4e470">
  <text x="601" y="56.1" text-anchor="end">0</text>
<text x="601" y="91.3" text-anchor="end">-20</text>
<text x="601" y="126.5" text-anchor="end">-40</text>
<text x="601" y="161.7" text-anchor="end">-60</text>
<text x="601" y="196.9" text-anchor="end">-80</text>
<text x="601" y="232.1" text-anchor="end">-100</text>
<text x="601" y="267.3" text-anchor="end">-120</text>
<text x="601" y="302.5" text-anchor="end">-140</text>
<text x="601" y="337.7" text-anchor="end">-160</text>
<text x="601" y="372.9" text-anchor="end">-180</text>
<text x="601" y="408.1" text-anchor="end">-200</text>
  <rect x="617" y="371" width="46" height="12" fill="#000"/>
  <text x="620" y="380.5">S21/S12</text>
 </g>
 <g font-size="10.5" fill="#44e444">
  <text x="1056" y="56.1">0</text>
<text x="1056" y="91.3">-20</text>
<text x="1056" y="126.5">-40</text>
<text x="1056" y="161.7">-60</text>
<text x="1056" y="196.9">-80</text>
<text x="1056" y="232.1">-100</text>
<text x="1056" y="267.3">-120</text>
<text x="1056" y="302.5">-140</text>
<text x="1056" y="337.7">-160</text>
<text x="1056" y="372.9">-180</text>
<text x="1056" y="408.1">-200</text>
 </g>
 <rect x="996" y="87" width="43" height="14" fill="#000"/>
 <text x="997" y="98" font-size="10.7" fill="#44e444">S11/S22</text>
 <g font-size="12" fill="#44d4cc">
  <text x="626.6" y="422" text-anchor="middle">6</text>
<text x="650.9" y="422" text-anchor="middle">7</text>
<text x="671.9" y="422" text-anchor="middle">8</text>
<text x="690.5" y="422" text-anchor="middle">9</text>
<text x="816.5" y="422" text-anchor="middle">2</text>
<text x="880.5" y="422" text-anchor="middle">3</text>
<text x="925.9" y="422" text-anchor="middle">4</text>
<text x="961.1" y="422" text-anchor="middle">5</text>
<text x="989.9" y="422" text-anchor="middle">6</text>
<text x="1014.2" y="422" text-anchor="middle">7</text>
<text x="1035.2" y="422" text-anchor="middle">8</text>
 </g>
 <text x="689" y="436.5" font-size="12.6" fill="#44d8d8">100 M</text>
 <text x="776" y="453.5" font-size="15.2" fill="#44d8d8">Frequency (Hz)</text>
 <text x="565" y="445.5" font-size="7.6" fill="#22a8a4">Hint: Use Mouse Keys to See Cursor Data</text>
 <text x="565.5" y="457.5" font-size="12.1" fill="#44d8d8">9th Order High Pass Chebyshev I</text>
 <text x="969.5" y="456" font-size="11.95" fill="#44d8d8" xml:space="preserve">Thu Nov  6 19:41 2025</text>
</svg>
</body></html>
